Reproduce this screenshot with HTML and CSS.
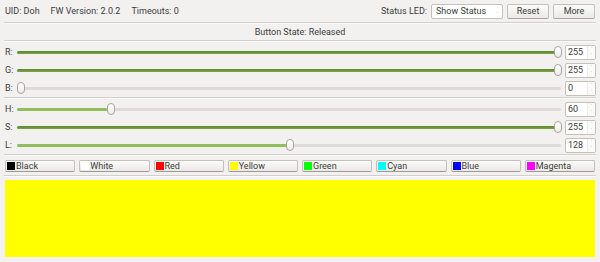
FILE: index.html
```html
<!DOCTYPE html>
<html lang="en">
<head>
  <meta charset="UTF-8" />
  <title>LED Controller</title>
  <link rel="stylesheet" href="styles.css">
</head>
<body>
  <div class="top">
    <span class="info uid">UID: Doh</span>
    <span class="info fw">FW Version: 2.0.2</span>
    <span class="info">Timeouts: 0</span>
    <span class="spacer"></span>
    <span class="led-label">Status LED:</span>
    <div class="combo">Show Status<span class="combo-arrows">&#729;<br>&#729;</span></div>
    <button class="btn reset">Reset</button>
    <button class="btn more">More</button>
  </div>
  <div class="sep"></div>
  <div class="state">Button State: Released</div>
  <div class="sep"></div>

  <section class="group">
    <div class="row">
      <label>R:</label>
      <div class="slider dark"><div class="groove"><div class="fill" style="width:calc(100% - 3px)"></div></div><div class="handle" style="left:calc(100% - 7px)"></div></div>
      <div class="spin"><span>255</span><span class="arrows">&#729;<br>&#729;</span></div>
    </div>
    <div class="row">
      <label>G:</label>
      <div class="slider dark"><div class="groove"><div class="fill" style="width:calc(100% - 3px)"></div></div><div class="handle" style="left:calc(100% - 7px)"></div></div>
      <div class="spin"><span>255</span><span class="arrows">&#729;<br>&#729;</span></div>
    </div>
    <div class="row">
      <label>B:</label>
      <div class="slider"><div class="groove"><div class="fill" style="width:0"></div></div><div class="handle" style="left:0"></div></div>
      <div class="spin"><span>0</span><span class="arrows">&#729;<br>&#729;</span></div>
    </div>
  </section>
  <div class="sep"></div>

  <section class="group">
    <div class="row">
      <label>H:</label>
      <div class="slider"><div class="groove"><div class="fill" style="width:calc(16.7% - 1px)"></div></div><div class="handle" style="left:calc(16.7% - 1px)"></div></div>
      <div class="spin"><span>60</span><span class="arrows">&#729;<br>&#729;</span></div>
    </div>
    <div class="row">
      <label>S:</label>
      <div class="slider dark"><div class="groove"><div class="fill" style="width:calc(100% - 3px)"></div></div><div class="handle" style="left:calc(100% - 7px)"></div></div>
      <div class="spin"><span>255</span><span class="arrows">&#729;<br>&#729;</span></div>
    </div>
    <div class="row">
      <label>L:</label>
      <div class="slider"><div class="groove"><div class="fill" style="width:calc(50.2% - 1px)"></div></div><div class="handle" style="left:calc(50.2% - 4px)"></div></div>
      <div class="spin"><span>128</span><span class="arrows">&#729;<br>&#729;</span></div>
    </div>
  </section>
  <div class="sep"></div>

  <div class="colors">
    <button class="cbtn"><i style="background:#000000"></i>Black</button>
    <button class="cbtn"><i style="background:#ffffff"></i>White</button>
    <button class="cbtn"><i style="background:#ff0000"></i>Red</button>
    <button class="cbtn"><i style="background:#ffff00"></i>Yellow</button>
    <button class="cbtn"><i style="background:#00ff00"></i>Green</button>
    <button class="cbtn"><i style="background:#00ffff"></i>Cyan</button>
    <button class="cbtn"><i style="background:#0000ff"></i>Blue</button>
    <button class="cbtn"><i style="background:#ff00ff"></i>Magenta</button>
  </div>
  <div class="sep"></div>

  <div class="preview" style="background:#ffff00"></div>
</body>
</html>
```

FILE: styles.css
```css
body {
  margin: 0;
  padding: 0 4px;
  width: 592px;
  background: #f2f1f0;
  color: #3c3c3c;
  font-family: Roboto, sans-serif;
  font-size: 9px;
}
.top {
  display: flex;
  align-items: center;
  height: 22px;
  padding: 0 1px;
}
.info {
  margin-right: 11px;
}
.spacer {
  flex: 1;
}
.led-label {
  margin-right: 4px;
}
.combo {
  position: relative;
  width: 66px;
  height: 13px;
  line-height: 13px;
  padding-left: 4px;
  background: #fff;
  border: 1px solid #c4c0ba;
  border-radius: 2px;
}
.combo-arrows {
  position: absolute;
  right: 4px;
  top: 1px;
  font-size: 6px;
  line-height: 5px;
  color: #999;
}
.btn {
  margin-left: 4px;
  height: 15px;
  padding: 0;
  font-family: inherit;
  font-size: 9px;
  color: #3c3c3c;
  background: linear-gradient(#fbfbfa, #ebe9e6);
  border: 1px solid #c4c0ba;
  border-bottom-color: #a9a59f;
  border-radius: 2px;
}
.reset {
  width: 42px;
}
.more {
  width: 42px;
}
.sep {
  border-top: 1px solid #d3cfca;
  border-bottom: 1px solid #fbfafa;
}
.state {
  height: 16px;
  line-height: 16px;
  text-align: center;
}
.group {
  padding-top: 1px;
}
.row {
  display: flex;
  align-items: center;
  height: 18px;
  padding-left: 1px;
}
.row label {
  width: 12px;
}
.slider {
  position: relative;
  flex: 1;
  height: 12px;
  margin-right: 4px;
}
.groove {
  position: absolute;
  left: 0;
  right: 0;
  top: 5px;
  height: 3px;
  background: #dedbd6;
  border-radius: 2px;
}
.fill {
  height: 3px;
  background: #91bd5b;
  border-radius: 2px;
}
.dark .fill {
  background: linear-gradient(#5c862f, #7aa648);
}
.handle {
  position: absolute;
  top: 0;
  width: 6px;
  height: 10px;
  background: linear-gradient(#ffffff, #eeece9);
  border: 1px solid #a8a49e;
  border-radius: 4px;
}
.spin {
  position: relative;
  width: 27px;
  height: 13px;
  line-height: 13px;
  padding-left: 2px;
  background: #fff;
  border: 1px solid #c4c0ba;
  border-radius: 2px;
}
.spin .arrows {
  position: absolute;
  right: 0;
  top: 0;
  width: 7px;
  height: 13px;
  border-left: 1px solid #eceae7;
  background: #fafaf9;
  font-size: 6px;
  line-height: 6px;
  text-align: center;
  color: #888;
}
.colors {
  display: flex;
  gap: 4px;
  padding: 4px 1px 3px;
}
.cbtn {
  flex: 1;
  display: flex;
  align-items: center;
  height: 12px;
  padding: 0 1px;
  font-family: inherit;
  font-size: 9px;
  color: #3c3c3c;
  background: linear-gradient(#fbfbfa, #ebe9e6);
  border: 1px solid #c4c0ba;
  border-bottom-color: #9d9994;
  border-radius: 2px;
}
.cbtn i {
  width: 8px;
  height: 8px;
  margin-right: 1px;
}
.preview {
  height: 77px;
  margin: 3px 1px 0;
}
```
